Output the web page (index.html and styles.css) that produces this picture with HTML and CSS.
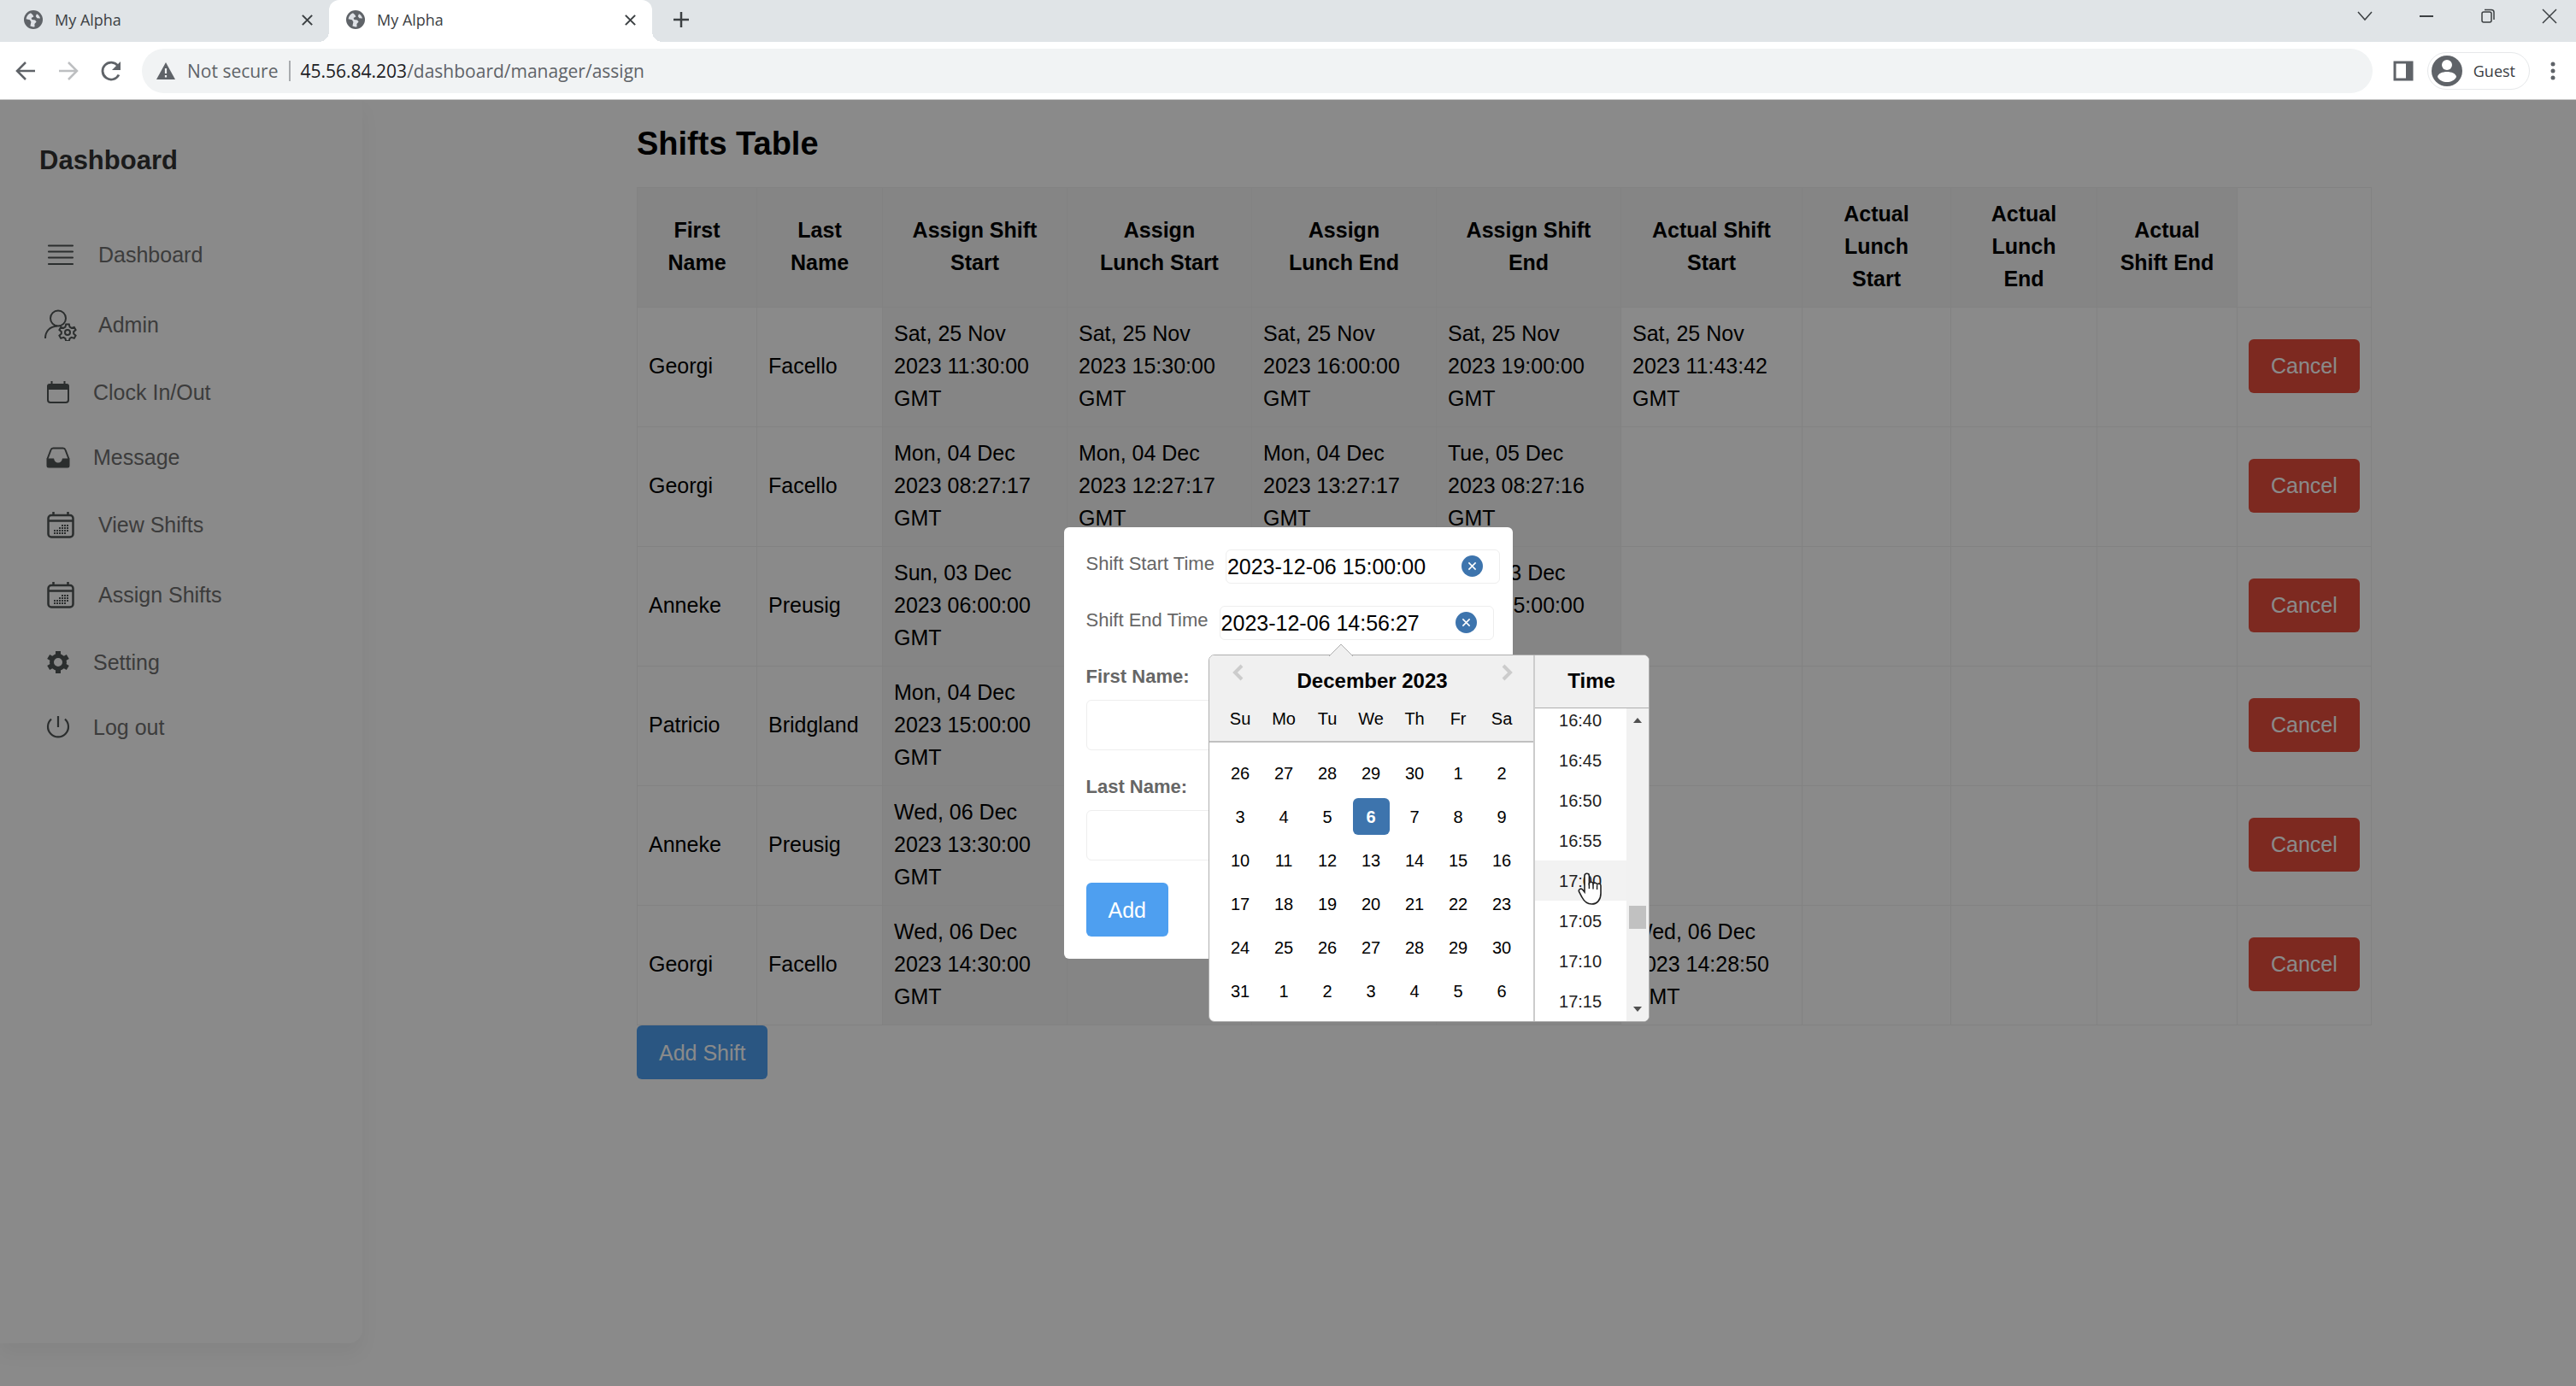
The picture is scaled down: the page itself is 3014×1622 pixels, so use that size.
FILE: index.html
```html
<!DOCTYPE html>
<html lang="en">
<head>
<meta charset="utf-8">
<title>My Alpha</title>
<link rel="stylesheet" href="styles.css">
</head>
<body>
<svg class="defs" aria-hidden="true">
  <symbol id="globe" viewBox="0 0 22 22"><circle cx="11" cy="11" r="11" fill="#5f6368"/><path d="M8 3.200C5 4.200 2.900 7 2.600 10.200L7 11.200 8.400 13.800 7.400 18.600C9 19.400 11 19.600 12.600 19.200L12.400 16 14.600 13.600 13 11.400 9.400 11 8.600 9 11.400 7.400 10.400 5.400Z" fill="#dee1e6"/><path d="M15 4.200L13.800 7 15.400 9.200 19 9.600C18.600 7.400 17 5.200 15 4.200Z" fill="#dee1e6"/></symbol>
  <symbol id="cross" viewBox="0 0 16 16"><path d="M2 2l12 12M14 2L2 14" fill="none" stroke="currentColor" stroke-width="2.200"/></symbol>
  <symbol id="schedule" viewBox="0 0 38 38"><g fill="none" stroke="currentColor" stroke-width="2.500"><rect x="4.500" y="8" width="29" height="25.500" rx="3.500"/><path d="M4.500 14.500h29M10.500 8V4M27.500 8V4"/></g><path d="M20 20h9M17 23h12M11 26h17M11 29h14" stroke="currentColor" stroke-width="2" stroke-dasharray="2 1"/></symbol>
</svg>

<header class="browser">
  <div class="tabs">
    <div class="tab"><svg class="favicon"><use href="#globe"/></svg><span>My Alpha</span><button class="plain close" aria-label="Close tab"><svg><use href="#cross"/></svg></button></div>
    <div class="tab tab-active"><svg class="favicon"><use href="#globe"/></svg><span>My Alpha</span><button class="plain close" aria-label="Close tab"><svg><use href="#cross"/></svg></button></div>
    <button class="plain new-tab" aria-label="New tab"><svg width="20" height="20" viewBox="0 0 20 20"><path d="M10 1v18M1 10h18" stroke="currentColor" stroke-width="2.500"/></svg></button>
    <div class="window-controls">
      <button class="plain" aria-label="Search tabs"><svg viewBox="0 0 18 18"><path d="M1 4l8 9 8-9" fill="none" stroke="currentColor" stroke-width="1.500"/></svg></button>
      <button class="plain" aria-label="Minimize"><svg viewBox="0 0 18 18"><path d="M1 9h16" stroke="currentColor" stroke-width="2"/></svg></button>
      <button class="plain" aria-label="Restore"><svg viewBox="0 0 18 18"><g fill="none" stroke="currentColor" stroke-width="1.500"><rect x="2" y="4" width="11" height="12" rx="2"/><path d="M5 1.500h8a3 3 0 0 1 3 3V13"/></g></svg></button>
      <button class="plain" aria-label="Close"><svg viewBox="0 0 18 18"><path d="M1 1l16 16M17 1L1 17" stroke="currentColor" stroke-width="1.500"/></svg></button>
    </div>
  </div>
  <div class="toolbar">
    <button class="plain" aria-label="Back"><svg width="24" height="24" viewBox="0 0 24 24"><path d="M23 12H2M12 2L2 12l10 10" fill="none" stroke="currentColor" stroke-width="2.500"/></svg></button>
    <button class="plain dim" aria-label="Forward"><svg width="24" height="24" viewBox="0 0 24 24"><path d="M1 12h21M12 2l10 10-10 10" fill="none" stroke="currentColor" stroke-width="2.500"/></svg></button>
    <button class="plain" aria-label="Reload"><svg width="24" height="24" viewBox="0 0 24 24"><path d="M21 16.500A10 10 0 1 1 20 6" fill="none" stroke="currentColor" stroke-width="2.800"/><path d="M23 1v10H13z" fill="currentColor"/></svg></button>
    <div class="omnibox">
      <svg width="22" height="20" viewBox="0 0 22 20"><path d="M11 0L22 20H0z" fill="#5f6368"/><path d="M11 7v6M11 15v2.500" stroke="#f1f3f4" stroke-width="2.200"/></svg>
      <span class="insecure">Not secure</span>
      <span class="url"><b>45.56.84.203</b>/dashboard/manager/assign</span>
    </div>
    <button class="plain" aria-label="Side panel"><svg width="24" height="24" viewBox="0 0 24 24"><rect x="2" y="2" width="20" height="20" fill="none" stroke="currentColor" stroke-width="3"/><path d="M15 2h7v20h-7z" fill="currentColor"/></svg></button>
    <button class="plain profile"><svg width="36" height="36" viewBox="0 0 36 36"><circle cx="18" cy="18" r="18" fill="#5f6368"/><circle cx="18" cy="11" r="6" fill="#fff"/><path d="M7 25c1-8 21-8 22 0-4 8-18 8-22 0z" fill="#fff"/></svg>Guest</button>
    <button class="plain menu" aria-label="Menu"><svg width="6" height="24" viewBox="0 0 6 24"><g fill="currentColor"><circle cx="3" cy="4" r="2.500"/><circle cx="3" cy="12" r="2.500"/><circle cx="3" cy="20" r="2.500"/></g></svg></button>
  </div>
</header>

<div class="page">
  <nav class="sidebar">
    <h2>Dashboard</h2>
    <a class="tall" href="#"><svg viewBox="0 0 38 38"><path d="M5 8.500h28M5 15.500h28M5 22.500h28M5 30h28" stroke="currentColor" stroke-width="2.200" stroke-linecap="round"/></svg>Dashboard</a>
    <a class="tall" href="#"><svg viewBox="0 0 38 38"><g fill="none" stroke="currentColor" stroke-width="2"><circle cx="16" cy="11.500" r="9"/><path d="M1 35c0-8 5-14 14-14.500"/><circle cx="27" cy="28" r="3"/><path d="M25.200 18.500h3.600l.8 3.200 2 1.200 3.200-1 1.800 3.200-2.400 2.200v2.200l2.400 2.200-1.800 3.200-3.200-1-2 1.200-.8 3h-3.600l-.8-3-2-1.200-3.200 1-1.800-3.200 2.400-2.200v-2.200l-2.400-2.200 1.800-3.200 3.200 1 2-1.200z"/></g></svg>Admin</a>
    <a href="#"><svg viewBox="0 0 32 32"><rect x="4" y="8" width="24" height="20" rx="3" fill="none" stroke="currentColor" stroke-width="2"/><path d="M3 13V9a3 3 0 0 1 3-3h20a3 3 0 0 1 3 3v4z" fill="currentColor"/><path d="M8.500 3v5M23.500 3v5" stroke="currentColor" stroke-width="2"/></svg>Clock In/Out</a>
    <a href="#"><svg viewBox="0 0 32 32"><path d="M3.500 18l4-10.500a3 3 0 0 1 3-2h11a3 3 0 0 1 3 2l4 10.500" fill="none" stroke="currentColor" stroke-width="2"/><path d="M2.500 17.500h8.500q1 5 5 5t5-5h8.500V26a2.500 2.500 0 0 1-2.500 2.500H5A2.500 2.500 0 0 1 2.500 26z" fill="currentColor"/></svg>Message</a>
    <a class="tall" href="#"><svg><use href="#schedule"/></svg>View Shifts</a>
    <a class="tall" href="#"><svg><use href="#schedule"/></svg>Assign Shifts</a>
    <a href="#"><svg viewBox="0 0 32 32"><circle cx="16" cy="16" r="7.500" fill="none" stroke="currentColor" stroke-width="5"/><path d="M16 3v6M16 23v6M4.700 9.500l5.200 3M22.100 19.500l5.200 3M4.700 22.500l5.200-3M22.100 12.500l5.200-3" stroke="currentColor" stroke-width="6"/></svg>Setting</a>
    <a href="#"><svg viewBox="0 0 32 32"><path d="M8 6.500a12 12 0 1 0 16 0M16 3v13" fill="none" stroke="currentColor" stroke-width="2.200"/></svg>Log out</a>
  </nav>

  <main class="content">
    <h1>Shifts Table</h1>
    <table class="shifts">
      <colgroup><col class="c-first"><col class="c-last"><col class="c-time" span="4"><col class="c-start"><col class="c-lunch"><col class="c-lunch-end"><col class="c-end"><col class="c-action"></colgroup>
      <thead>
        <tr><th>First<br>Name</th><th>Last<br>Name</th><th>Assign Shift<br>Start</th><th>Assign<br>Lunch Start</th><th>Assign<br>Lunch End</th><th>Assign Shift<br>End</th><th>Actual Shift<br>Start</th><th>Actual<br>Lunch<br>Start</th><th>Actual<br>Lunch<br>End</th><th>Actual<br>Shift End</th><td></td></tr>
      </thead>
      <tbody>
        <tr><td>Georgi</td><td>Facello</td><td>Sat, 25 Nov 2023 11:30:00 GMT</td><td>Sat, 25 Nov 2023 15:30:00 GMT</td><td>Sat, 25 Nov 2023 16:00:00 GMT</td><td>Sat, 25 Nov 2023 19:00:00 GMT</td><td>Sat, 25 Nov 2023 11:43:42 GMT</td><td></td><td></td><td></td><td><button class="btn btn-danger">Cancel</button></td></tr>
        <tr><td>Georgi</td><td>Facello</td><td>Mon, 04 Dec 2023 08:27:17 GMT</td><td>Mon, 04 Dec 2023 12:27:17 GMT</td><td>Mon, 04 Dec 2023 13:27:17 GMT</td><td>Tue, 05 Dec 2023 08:27:16 GMT</td><td></td><td></td><td></td><td></td><td><button class="btn btn-danger">Cancel</button></td></tr>
        <tr><td>Anneke</td><td>Preusig</td><td>Sun, 03 Dec 2023 06:00:00 GMT</td><td></td><td></td><td>Sun, 03 Dec 2023 15:00:00 GMT</td><td></td><td></td><td></td><td></td><td><button class="btn btn-danger">Cancel</button></td></tr>
        <tr><td>Patricio</td><td>Bridgland</td><td>Mon, 04 Dec 2023 15:00:00 GMT</td><td></td><td></td><td></td><td></td><td></td><td></td><td></td><td><button class="btn btn-danger">Cancel</button></td></tr>
        <tr><td>Anneke</td><td>Preusig</td><td>Wed, 06 Dec 2023 13:30:00 GMT</td><td></td><td></td><td></td><td></td><td></td><td></td><td></td><td><button class="btn btn-danger">Cancel</button></td></tr>
        <tr><td>Georgi</td><td>Facello</td><td>Wed, 06 Dec 2023 14:30:00 GMT</td><td></td><td></td><td></td><td>Wed, 06 Dec 2023 14:28:50 GMT</td><td></td><td></td><td></td><td><button class="btn btn-danger">Cancel</button></td></tr>
      </tbody>
    </table>
    <button class="btn btn-primary">Add Shift</button>
  </main>

  <div class="overlay">
    <form class="dialog">
      <div class="inline-field">
        <label for="start">Shift Start Time</label>
        <div class="picker"><input id="start" type="text" value="2023-12-06 15:00:00"><button type="button" class="clear" aria-label="Clear"><svg><use href="#cross"/></svg></button></div>
      </div>
      <div class="inline-field">
        <label for="end">Shift End Time</label>
        <div class="picker"><input id="end" type="text" value="2023-12-06 14:56:27"><button type="button" class="clear" aria-label="Clear"><svg><use href="#cross"/></svg></button>
          <div class="popper">
            <svg class="arrow" viewBox="0 0 28 15"><path d="M0 15L14 1l14 14" fill="#f0f0f0" stroke="#aeaeae"/></svg>
            <div class="month">
              <div class="month-head">
                <div class="month-title">
                  <button type="button" class="plain step" aria-label="Previous month"><svg viewBox="0 0 14 20"><path d="M12 2L4 10l8 8" fill="none" stroke="currentColor" stroke-width="4"/></svg></button>
                  <strong>December 2023</strong>
                  <button type="button" class="plain step" aria-label="Next month"><svg viewBox="0 0 14 20"><path d="M2 2l8 8-8 8" fill="none" stroke="currentColor" stroke-width="4"/></svg></button>
                </div>
                <div class="week names"><span>Su</span><span>Mo</span><span>Tu</span><span>We</span><span>Th</span><span>Fr</span><span>Sa</span></div>
              </div>
              <div class="week days">
                <button type="button">26</button><button type="button">27</button><button type="button">28</button><button type="button">29</button><button type="button">30</button><button type="button">1</button><button type="button">2</button>
                <button type="button">3</button><button type="button">4</button><button type="button">5</button><button type="button" class="selected">6</button><button type="button">7</button><button type="button">8</button><button type="button">9</button>
                <button type="button">10</button><button type="button">11</button><button type="button">12</button><button type="button">13</button><button type="button">14</button><button type="button">15</button><button type="button">16</button>
                <button type="button">17</button><button type="button">18</button><button type="button">19</button><button type="button">20</button><button type="button">21</button><button type="button">22</button><button type="button">23</button>
                <button type="button">24</button><button type="button">25</button><button type="button">26</button><button type="button">27</button><button type="button">28</button><button type="button">29</button><button type="button">30</button>
                <button type="button">31</button><button type="button">1</button><button type="button">2</button><button type="button">3</button><button type="button">4</button><button type="button">5</button><button type="button">6</button>
              </div>
            </div>
            <div class="time">
              <strong>Time</strong>
              <div class="time-body">
                <ul>
                  <li><button type="button">16:40</button></li>
                  <li><button type="button">16:45</button></li>
                  <li><button type="button">16:50</button></li>
                  <li><button type="button">16:55</button></li>
                  <li class="hover"><button type="button">17:00</button><svg class="pointer" viewBox="0 0 28 38"><path d="M8 23V4a2.700 2.700 0 0 1 5.400 0v8.500a2.500 2.500 0 0 1 4.600.8 2.500 2.500 0 0 1 4.600 1.200 2.300 2.300 0 0 1 4.400 1v9c0 7-4 12.500-10.500 12.500S7 33 5 29L1.500 22.500c-1-3 2.500-4.500 4.500-2z" fill="#fff" stroke="#222" stroke-width="1.600"/><path d="M13.400 12v7M18 13.500v6M22.600 15v5" stroke="#222" stroke-width="1.500"/></svg></li>
                  <li><button type="button">17:05</button></li>
                  <li><button type="button">17:10</button></li>
                  <li><button type="button">17:15</button></li>
                </ul>
                <div class="scrollbar">
                  <svg viewBox="0 0 10 6"><path d="M0 6l5-6 5 6z" fill="#505050"/></svg>
                  <i></i>
                  <svg viewBox="0 0 10 6"><path d="M0 0l5 6 5-6z" fill="#505050"/></svg>
                </div>
              </div>
            </div>
          </div>
        </div>
      </div>
      <div class="field"><label for="first">First Name:</label><input id="first" type="text"></div>
      <div class="field"><label for="last">Last Name:</label><input id="last" type="text"></div>
      <button type="button" class="btn btn-primary submit">Add</button>
    </form>
  </div>
</div>
</body>
</html>
```
FILE: styles.css
```css
* { box-sizing: border-box; }
body {
  margin: 0;
  min-height: 100vh;
  display: flex;
  flex-direction: column;
  background: #fff;
  color: #000;
  font: 25px/38px "Liberation Sans", Arial, sans-serif;
}
button, input { font: inherit; }
svg { display: block; }
.defs { position: absolute; width: 0; height: 0; }
.plain { padding: 0; border: 0; background: none; color: inherit; }

/* Browser bar */
.browser {
  font: 18px/24px "Open Sans", "Noto Sans", sans-serif;
  color: #3c4043;
  border-bottom: 1px solid #c8c8c8;
}
.tabs { display: flex; align-items: stretch; height: 49px; background: #e0e4e7; }
.tab {
  display: flex;
  align-items: center;
  gap: 14px;
  width: 385px;
  padding: 0 18px 3px 28px;
}
.tab-active {
  position: relative;
  width: 378px;
  padding-left: 20px;
  background: #fff;
  border-radius: 12px 12px 0 0;
}
.tab-active::before, .tab-active::after {
  content: "";
  position: absolute;
  bottom: 0;
  width: 12px;
  height: 12px;
}
.tab-active::before { right: 100%; background: radial-gradient(circle at 0 0, transparent 12px, #fff 12px); }
.tab-active::after { left: 100%; background: radial-gradient(circle at 100% 0, transparent 12px, #fff 12px); }
.favicon { width: 22px; height: 22px; }
.close { margin-left: auto; }
.close svg { width: 15px; height: 15px; }
.new-tab { margin: 0 24px 3px; }
.window-controls {
  display: flex;
  gap: 54px;
  margin-left: auto;
  padding: 0 22px 12px 0;
}
.window-controls svg { width: 18px; height: 18px; }
.toolbar {
  display: flex;
  align-items: center;
  height: 67px;
  padding: 0 24px 0 18px;
  gap: 26px;
  color: #5f6368;
}
.dim { color: #bdbfc1; }
.omnibox {
  flex: 1;
  display: flex;
  align-items: center;
  height: 52px;
  margin: 0 -2px;
  padding-left: 17px;
  border-radius: 26px;
  background: #f1f3f4;
  font-size: 21px;
}
.insecure { margin: 0 12px 0 14px; }
.url { padding-left: 12px; border-left: 2px solid #a8abae; }
.url b { font-weight: 400; color: #202124; }
.profile {
  display: flex;
  align-items: center;
  gap: 13px;
  height: 44px;
  margin: 0 -2px 0 -10px;
  padding: 0 16px 0 4px;
  border: 1px solid #e6e8ea;
  border-radius: 22px;
  color: #3c4043;
}

/* Page */
.page { position: relative; flex: 1; display: flex; align-items: stretch; }
.sidebar {
  flex: none;
  width: 424px;
  margin-bottom: 50px;
  padding: 51px 20px 20px 52px;
  border-radius: 0 0 16px 0;
  box-shadow: 0 12px 22px rgba(0, 0, 0, .05);
  color: #505555;
}
.sidebar h2 {
  margin: 0 0 49px -6px;
  font-size: 31px;
  line-height: 40px;
  color: #333;
}
.sidebar a {
  display: flex;
  align-items: center;
  gap: 25px;
  height: 76px;
  color: #707070;
  text-decoration: none;
}
.sidebar a svg { width: 32px; height: 32px; color: #505555; }
.sidebar .tall { height: 82px; }
.sidebar .tall svg { width: 38px; height: 38px; }

.content { flex: 1; padding: 27px 240px 26px 321px; }
.content h1 { margin: 0 0 27px; font-size: 38px; line-height: 48px; }

.shifts { width: 100%; table-layout: fixed; border-collapse: collapse; }
.shifts th, .shifts td { padding: 11px 13px 14px; border: 1px solid #f0f0f0; text-align: left; }
.shifts thead td, .shifts tbody td { height: 140px; }
.shifts th { text-align: center; background: #f6f6f6; }
.shifts tbody td:nth-child(n+3):nth-child(-n+6) { background: #f6f6f6; }
.c-first { width: 140px; }
.c-last { width: 147px; }
.c-time { width: 216px; }
.c-start { width: 212px; }
.c-lunch { width: 174px; }
.c-lunch-end { width: 171px; }
.c-end { width: 164px; }
.c-action { width: 157px; }

.btn {
  display: block;
  height: 63px;
  padding: 0 26px;
  border: 0;
  border-radius: 6px;
  color: #fff;
}
.btn-primary { background: #4e9ff0; }
.btn-danger { background: #e74c3c; }

/* Dialog */
.overlay {
  position: absolute;
  inset: 0;
  display: flex;
  align-items: center;
  justify-content: center;
  background: rgba(0, 0, 0, .46);
}
.dialog {
  width: 525px;
  padding: 26px;
  border-radius: 6px;
  background: #fff;
  color: #666;
  font-size: 22px;
  line-height: 30px;
}
.dialog input {
  display: block;
  border: 1px solid #eee;
  border-radius: 6px;
  background: #fff;
  color: #000;
  font-size: 25px;
}
.inline-field { display: flex; gap: 13px; margin-bottom: 26px; white-space: nowrap; }
.inline-field label { padding-top: 2px; }
.picker { position: relative; flex: none; width: 321px; }
.picker input { width: 100%; height: 40px; padding: 0 60px 0 1px; }
.clear {
  position: absolute;
  top: 7px;
  right: 20px;
  display: grid;
  place-items: center;
  width: 25px;
  height: 25px;
  padding: 0;
  border: 0;
  border-radius: 50%;
  background: #3d74ad;
  color: #fff;
}
.clear svg { width: 11px; height: 11px; }
.field label { display: block; padding-top: 2px; margin-bottom: 12px; font-weight: 700; }
.field input { width: 100%; height: 59px; margin-bottom: 26px; padding: 0 12px; }
.submit { font-size: 25px; }

/* Date and time popup */
.popper {
  position: absolute;
  top: calc(100% + 17px);
  left: -13px;
  display: flex;
  border: 1px solid #aeaeae;
  border-radius: 7px;
  background: #fff;
  color: #000;
  font-size: 20px;
}
.popper strong { font-size: 24px; }
.arrow { position: absolute; left: 140px; bottom: 100%; width: 28px; height: 15px; margin-bottom: -1px; }
.month-head {
  height: 102px;
  padding: 10px 11px 0;
  border-bottom: 2px solid #c0c0c0;
  border-radius: 6px 0 0 0;
  background: #f0f0f0;
}
.month-title { display: flex; justify-content: space-between; padding: 0 12px 0 15px; height: 49px; }
.month-title strong { line-height: 40px; }
.step { align-self: flex-start; color: #ccc; }
.step svg { width: 14px; height: 20px; }
.week { display: grid; grid-template-columns: repeat(7, 51px); justify-items: center; }
.days { grid-auto-rows: 51px; align-items: center; padding: 10px 11px; }
.days button {
  width: 43px;
  height: 43px;
  padding: 0;
  border: 0;
  border-radius: 6px;
  background: none;
  color: #000;
}
.days .selected { background: #3d74ad; color: #fff; font-weight: 700; }
.time { width: 135px; border-left: 2px solid #ccc; }
.time strong {
  display: block;
  height: 62px;
  padding-top: 10px;
  border-bottom: 1px solid #aeaeae;
  border-radius: 0 6px 0 0;
  background: #f0f0f0;
  line-height: 40px;
  text-align: center;
}
.time-body { display: flex; height: 366px; }
.time ul {
  flex: 1;
  display: flex;
  flex-direction: column;
  justify-content: flex-end;
  margin: 0;
  padding: 0;
  list-style: none;
  overflow: hidden;
}
.time li { flex: none; position: relative; height: 47px; }
.time li button { width: 100%; height: 100%; padding: 0; border: 0; background: none; color: #222; }
.time .hover { background: #f2f2f2; }
.pointer { position: absolute; left: 50px; top: 14px; width: 28px; height: 38px; z-index: 1; }
.scrollbar {
  display: flex;
  flex-direction: column;
  align-items: center;
  width: 26px;
  padding: 11px 0;
  border-radius: 0 0 6px 0;
  background: #f1f1f1;
}
.scrollbar svg { width: 10px; height: 6px; }
.scrollbar i { width: 20px; height: 27px; margin: auto 0 91px; background: #c1c1c1; }
```
